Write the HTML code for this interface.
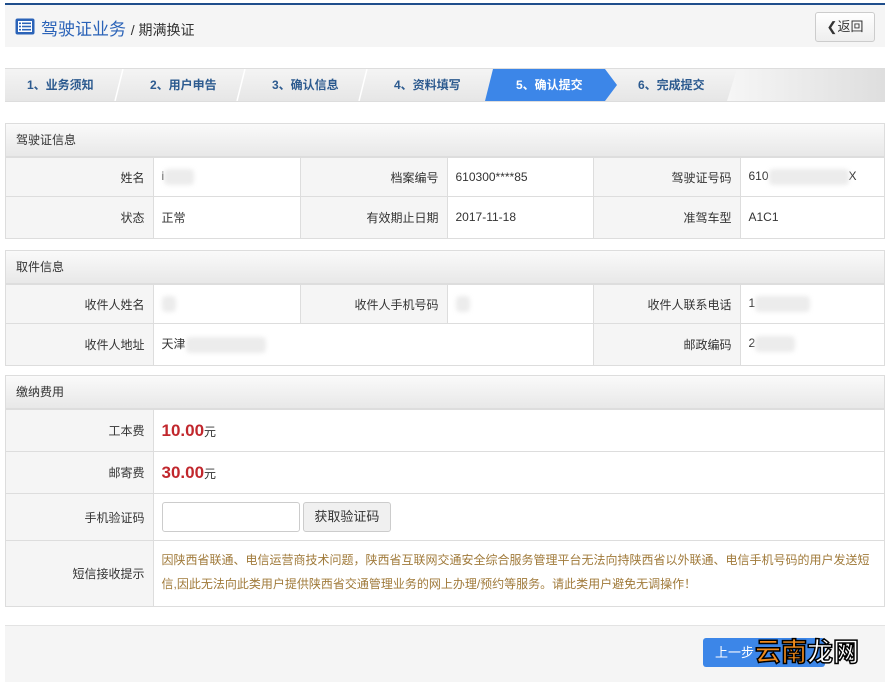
<!DOCTYPE html>
<html><head><meta charset="utf-8">
<style>
*{margin:0;padding:0;box-sizing:border-box}
body{width:889px;height:682px;background:#fff;font-family:"Liberation Sans","Noto Sans CJK SC",sans-serif;font-size:12px;color:#333;position:relative;overflow:hidden}
.a{position:absolute}
.hdr{left:5px;top:3px;width:880px;height:44px;background:#f5f5f5;border-top:2px solid #1f4e8c}
.steps{left:5px;top:68px;width:880px;height:34px;background:linear-gradient(#f4f4f4,#e6e6e6);border-top:1px solid #ddd;border-bottom:1px solid #ddd}
.step{position:absolute;top:0;height:32px;line-height:32px;font-weight:bold;color:#2c5a8f;font-size:12px}
.panel{left:5px;width:880px;border:1px solid #ddd;background:#fff}
.ph{height:33px;line-height:33px;padding-left:10px;background:linear-gradient(#fafafa,#e8e8e8);border-bottom:1px solid #ddd;color:#333}
table{border-collapse:collapse;width:100%}
td{border-top:1px solid #ddd;border-left:1px solid #ddd;padding:0 8px;font-size:12px}
td:first-child{border-left:none}
td.l{background:#f5f5f5;text-align:right;width:147px}
.blur{display:inline-block;background:#ececec;border-radius:4px;filter:blur(2px);vertical-align:middle;height:16px}
.red{color:#c1272d;font-size:17px;font-weight:bold}
</style></head><body>
<div class="a hdr">
 <svg class="a" style="left:10px;top:13px" width="20" height="17" viewBox="0 0 20 17"><rect x="0.5" y="0.5" width="19" height="16" rx="2" fill="#2b63b8"/><rect x="3" y="3" width="14" height="11" fill="#fff"/><g fill="#2b63b8"><rect x="4" y="4.5" width="2" height="1.6"/><rect x="7" y="4.5" width="9" height="1.6"/><rect x="4" y="7.7" width="2" height="1.6"/><rect x="7" y="7.7" width="9" height="1.6"/><rect x="4" y="10.9" width="2" height="1.6"/><rect x="7" y="10.9" width="9" height="1.6"/></g></svg>
 <div class="a" style="left:36px;top:10px;font-size:17px;color:#2b63b8">驾驶证业务 <span style="font-size:14px;color:#333">/ 期满换证</span></div>
 <div class="a" style="left:810px;top:7px;width:60px;height:30px;border:1px solid #ccc;background:linear-gradient(#fff,#eee);border-radius:3px;text-align:center;line-height:28px;font-size:13px;color:#333">❮返回</div>
</div>
<div class="a steps">
 <svg class="a" style="left:0;top:0" width="880" height="32">
 <defs><linearGradient id="g" x1="0" x2="1"><stop offset="0" stop-color="#f6f6f6"/><stop offset="1" stop-color="#dedede"/></linearGradient></defs>
 <polygon points="732,0 880,0 880,32 722,32" fill="url(#g)"/>
 <g stroke="#fff" stroke-width="1.5" fill="none"><line x1="118" y1="0" x2="110" y2="32"/><line x1="240" y1="0" x2="232" y2="32"/><line x1="362" y1="0" x2="354" y2="32"/></g>
 <polygon points="488,0 600,0 612,16 600,32 480,32" fill="#3c86e8"/>
 </svg>
 <div class="step" style="left:22px">1、业务须知</div>
 <div class="step" style="left:145px">2、用户申告</div>
 <div class="step" style="left:267px">3、确认信息</div>
 <div class="step" style="left:389px">4、资料填写</div>
 <div class="step" style="left:511px;color:#fff">5、确认提交</div>
 <div class="step" style="left:633px">6、完成提交</div>
</div>
<div class="a panel" style="top:123px"><div class="ph">驾驶证信息</div>
<table><tr style="height:39px"><td class="l">姓名</td><td style="width:147px">і<span class="blur" style="width:30px"></span></td><td class="l">档案编号</td><td style="width:146px">610300****85</td><td class="l">驾驶证号码</td><td>610<span class="blur" style="width:80px"></span>X</td></tr>
<tr style="height:41px"><td class="l">状态</td><td>正常</td><td class="l">有效期止日期</td><td>2017-11-18</td><td class="l">准驾车型</td><td>A1C1</td></tr></table></div>
<div class="a panel" style="top:250px"><div class="ph">取件信息</div>
<table><tr style="height:39px"><td class="l">收件人姓名</td><td style="width:147px"><span class="blur" style="width:14px"></span></td><td class="l">收件人手机号码</td><td style="width:146px"><span class="blur" style="width:14px"></span></td><td class="l">收件人联系电话</td><td>1<span class="blur" style="width:55px"></span></td></tr>
<tr style="height:41px"><td class="l">收件人地址</td><td colspan="3" style="border-right:1px solid #ddd">天津<span class="blur" style="width:80px"></span></td><td class="l">邮政编码</td><td>2<span class="blur" style="width:40px"></span></td></tr></table></div>
<div class="a panel" style="top:375px"><div class="ph">缴纳费用</div>
<table><tr style="height:42px"><td class="l">工本费</td><td><span class="red">10.00</span>元</td></tr>
<tr style="height:42px"><td class="l">邮寄费</td><td><span class="red">30.00</span>元</td></tr>
<tr style="height:47px"><td class="l">手机验证码</td><td><span style="display:inline-block;width:138px;height:30px;border:1px solid #ccc;border-radius:3px;vertical-align:middle"></span> <span style="display:inline-block;width:88px;height:30px;border:1px solid #ccc;background:#f0f0f0;border-radius:3px;vertical-align:middle;text-align:center;line-height:28px;font-size:13px">获取验证码</span></td></tr>
<tr style="height:65px"><td class="l">短信接收提示</td><td style="color:#a07a3a;line-height:24px;padding-top:6px;padding-bottom:8px">因陕西省联通、电信运营商技术问题，陕西省互联网交通安全综合服务管理平台无法向持陕西省以外联通、电信手机号码的用户发送短信,因此无法向此类用户提供陕西省交通管理业务的网上办理/预约等服务。请此类用户避免无调操作！</td></tr></table></div>
<div class="a" style="left:5px;top:625px;width:880px;height:57px;background:#f5f5f5;border-top:1px solid #e3e3e3"></div>
<div class="a" style="left:703px;top:638px;width:122px;height:29px;background:#3c86e8;border-radius:3px;color:#fff;line-height:29px;padding-left:12px;font-size:13px">上一步</div>
<div class="a" style="left:755px;top:636px;font-size:26px;font-weight:bold;line-height:32px;-webkit-text-stroke:1.5px #000"><span style="color:#f08a1c">云南</span><span style="color:#fff">龙网</span></div>
</body></html>
